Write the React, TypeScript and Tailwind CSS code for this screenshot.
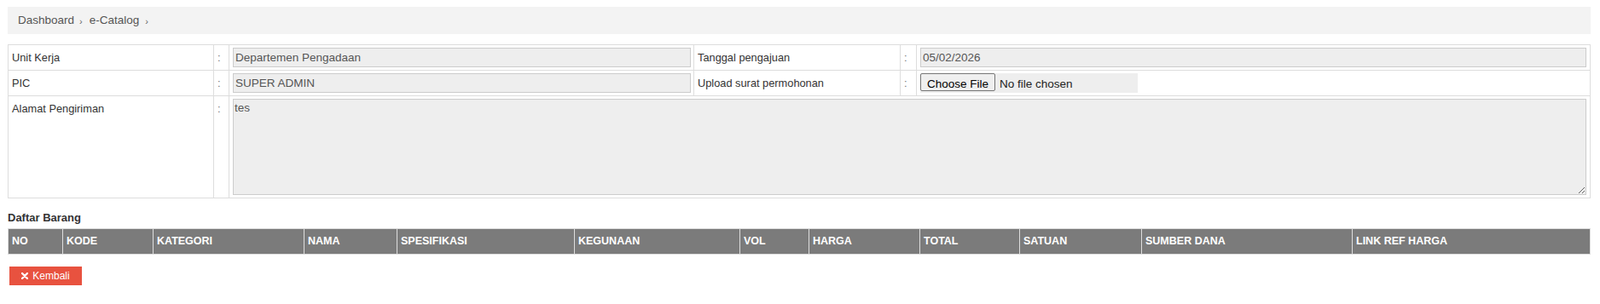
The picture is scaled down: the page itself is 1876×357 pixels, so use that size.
import React from 'react';

const headers: [string, number][] = [
  ['NO', 64],
  ['KODE', 106],
  ['KATEGORI', 177],
  ['NAMA', 109],
  ['SPESIFIKASI', 208],
  ['KEGUNAAN', 194],
  ['VOL', 81],
  ['HARGA', 130],
  ['TOTAL', 117],
  ['SATUAN', 143],
  ['SUMBER DANA', 247],
  ['LINK REF HARGA', 279],
];

function Breadcrumb() {
  return (
    <div className="flex h-[32px] items-center bg-[#f3f3f3] pl-[12px] text-[13.5px] text-[#555]">
      <span>Dashboard</span>
      <span className="ml-[6px] mr-[8px] mt-[3px] text-[11px] text-[#666]">›</span>
      <span>e-Catalog</span>
      <span className="ml-[7px] mt-[3px] text-[11px] text-[#666]">›</span>
    </div>
  );
}

function FormTable() {
  const td = 'border border-[#ddd] px-[4px] py-[3px] align-top';
  const label = `${td} leading-[23px] text-[#333]`;
  const input =
    'block h-[23px] w-full border border-[#ccc] bg-[#eee] px-[2px] text-[13.5px] text-[#555] outline-none';
  return (
    <table className="mt-[12px] w-full table-fixed border-collapse border border-[#ddd] text-[12.8px]">
      <colgroup>
        <col className="w-[241px]" />
        <col className="w-[18px]" />
        <col className="w-[545px]" />
        <col className="w-[242px]" />
        <col className="w-[19px]" />
        <col />
      </colgroup>
      <tbody>
        <tr>
          <td className={label}>Unit Kerja</td>
          <td className={`${label} text-[#777]`}>:</td>
          <td className={`${td} pr-[3px]`}>
            <input className={input} readOnly value="Departemen Pengadaan" />
          </td>
          <td className={label}>Tanggal pengajuan</td>
          <td className={`${label} text-[#777]`}>:</td>
          <td className={td}>
            <input className={input} readOnly value="05/02/2026" />
          </td>
        </tr>
        <tr>
          <td className={label}>PIC</td>
          <td className={`${label} text-[#777]`}>:</td>
          <td className={`${td} pr-[3px]`}>
            <input className={input} readOnly value="SUPER ADMIN" />
          </td>
          <td className={label}>Upload surat permohonan</td>
          <td className={`${label} text-[#777]`}>:</td>
          <td className={td}>
            <input
              type="file"
              className="block h-[23px] w-[255px] bg-[#eee] text-[13.5px] leading-[23px] text-[#222] file:mr-[5px] file:h-[21px] file:rounded-[2px] file:border file:border-[#767676] file:bg-[#efefef] file:px-[7px] file:text-[13.5px] file:text-black"
            />
          </td>
        </tr>
        <tr>
          <td className={label}>Alamat Pengiriman</td>
          <td className={`${label} text-[#777]`}>:</td>
          <td className={td} colSpan={4}>
            <textarea
              className="block h-[113px] w-full border border-[#ccc] bg-[#eee] px-[1px] py-[1px] text-[13.5px] leading-[18px] text-[#555] outline-none"
              readOnly
              value="tes"
            />
          </td>
        </tr>
      </tbody>
    </table>
  );
}

function ItemTable() {
  return (
    <>
      <div className="mt-[13px] text-[13px] font-bold leading-[20px] text-[#333]">Daftar Barang</div>
      <table className="mt-[2px] w-full table-fixed border-collapse border border-[#ddd]">
        <colgroup>
          {headers.map(([h, w], i) =>
            i === headers.length - 1 ? <col key={h} /> : <col key={h} style={{ width: w }} />
          )}
        </colgroup>
        <thead>
          <tr className="h-[30px] bg-[#7b7b7b]">
            {headers.map(([h]) => (
              <th
                key={h}
                className="border border-[#ddd] px-[4px] text-left text-[12.5px] font-bold text-white"
              >
                {h}
              </th>
            ))}
          </tr>
        </thead>
      </table>
    </>
  );
}

export default function App() {
  return (
    <div
      className="min-h-[357px] bg-white pl-[9px] pr-[11px] pt-[8px]"
      style={{ fontFamily: '"Liberation Sans", Arial, sans-serif' }}
    >
      <Breadcrumb />
      <FormTable />
      <ItemTable />
      <button className="ml-[2px] mt-[14px] flex h-[22px] w-[85px] items-center justify-center gap-[5px] bg-[#e8523f] text-[12px] text-white">
        <svg width="8" height="8" viewBox="0 0 8 8">
          <path d="M1 1L7 7M7 1L1 7" stroke="white" strokeWidth="2.4" strokeLinecap="round" />
        </svg>
        Kembali
      </button>
    </div>
  );
}
